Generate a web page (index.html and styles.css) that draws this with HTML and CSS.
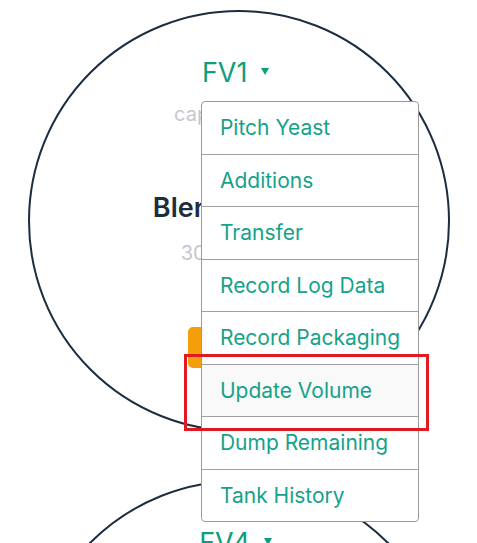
FILE: index.html
```html
<!DOCTYPE html>
<html>
<head>
<meta charset="utf-8">
<link rel="stylesheet" href="styles.css">
</head>
<body>
<div class="tanks">
  <div class="tank">
    <div class="tank-head">
      <div class="tank-name">FV1 <span class="caret"></span>
        <ul class="menu">
          <li class="menu-item">Pitch Yeast</li>
          <li class="menu-item">Additions</li>
          <li class="menu-item">Transfer</li>
          <li class="menu-item">Record Log Data</li>
          <li class="menu-item">Record Packaging</li>
          <li class="menu-item is-hover">Update Volume<span class="highlight"></span></li>
          <li class="menu-item">Dump Remaining</li>
          <li class="menu-item">Tank History</li>
        </ul>
      </div>
    </div>
    <div class="tank-cap">capacity 30.0</div>
    <div class="tank-beer">Blended Ales</div>
    <div class="tank-vol">30.00 / 30.0</div>
    <div class="tank-action">Start</div>
  </div>
  <div class="tank">
    <div class="tank-head">
      <div class="tank-name">FV4 <span class="caret"></span></div>
    </div>
  </div>
</div>
</body>
</html>
```
FILE: styles.css
```css
html, body {
  margin: 0;
  padding: 0;
  background: #fff;
  font-family: Inter, "Noto Sans", sans-serif;
  overflow: hidden;
}
.tanks {
  display: flex;
  flex-direction: column;
  align-items: center;
  gap: 48px;
  padding-top: 10px;
  height: 533px;
  overflow: hidden;
}
.tank {
  width: 422px;
  height: 422px;
  box-sizing: border-box;
  border: 2px solid #1c2d40;
  border-radius: 50%;
  display: flex;
  flex-direction: column;
  align-items: center;
  padding-top: 45px;
  flex-shrink: 0;
}
.tank-head {
  height: 32px;
}
.tank-name {
  position: relative;
  font-size: 27px;
  line-height: 32px;
  color: #0f9d7a;
  white-space: nowrap;
  margin-right: 6px;
}
.caret {
  display: inline-block;
  width: 0;
  height: 0;
  border-left: 4px solid transparent;
  border-right: 4px solid transparent;
  border-top: 7px solid #0f9d7a;
  vertical-align: middle;
  margin-left: 6px;
  position: relative;
  top: -3px;
}
.tank-cap {
  margin-top: 13px;
  font-size: 20px;
  line-height: 24px;
  color: #c6c6ce;
  white-space: nowrap;
}
.tank-beer {
  margin-top: 66px;
  font-size: 27px;
  line-height: 32px;
  font-weight: 600;
  color: #1e2d3d;
  white-space: nowrap;
}
.tank-vol {
  margin-top: 17px;
  font-size: 20px;
  line-height: 24px;
  color: #c6c6ce;
  white-space: nowrap;
}
.tank-action {
  margin-top: 62px;
  width: 102px;
  height: 41px;
  border-radius: 5px;
  background: #f59e0b;
  color: #fff;
  font-size: 18px;
  line-height: 41px;
  text-align: center;
}
.menu {
  position: absolute;
  left: -1px;
  top: 44px;
  margin: 0;
  padding: 0;
  list-style: none;
  width: 216px;
  background: #fff;
  border: 1px solid #9a9a9a;
  border-radius: 4px;
  z-index: 5;
}
.menu-item {
  position: relative;
  height: 51.5px;
  line-height: 51.5px;
  padding-left: 18px;
  font-size: 21px;
  color: #16a28a;
  border-top: 1px solid #a0a0a0;
}
.menu-item:first-child {
  border-top: none;
}
.menu-item.is-hover {
  background: #f9f9f9;
}
.highlight {
  position: absolute;
  left: -18px;
  top: -11px;
  width: 245px;
  height: 77px;
  box-sizing: border-box;
  border: 3px solid #e11a22;
  pointer-events: none;
}
```
